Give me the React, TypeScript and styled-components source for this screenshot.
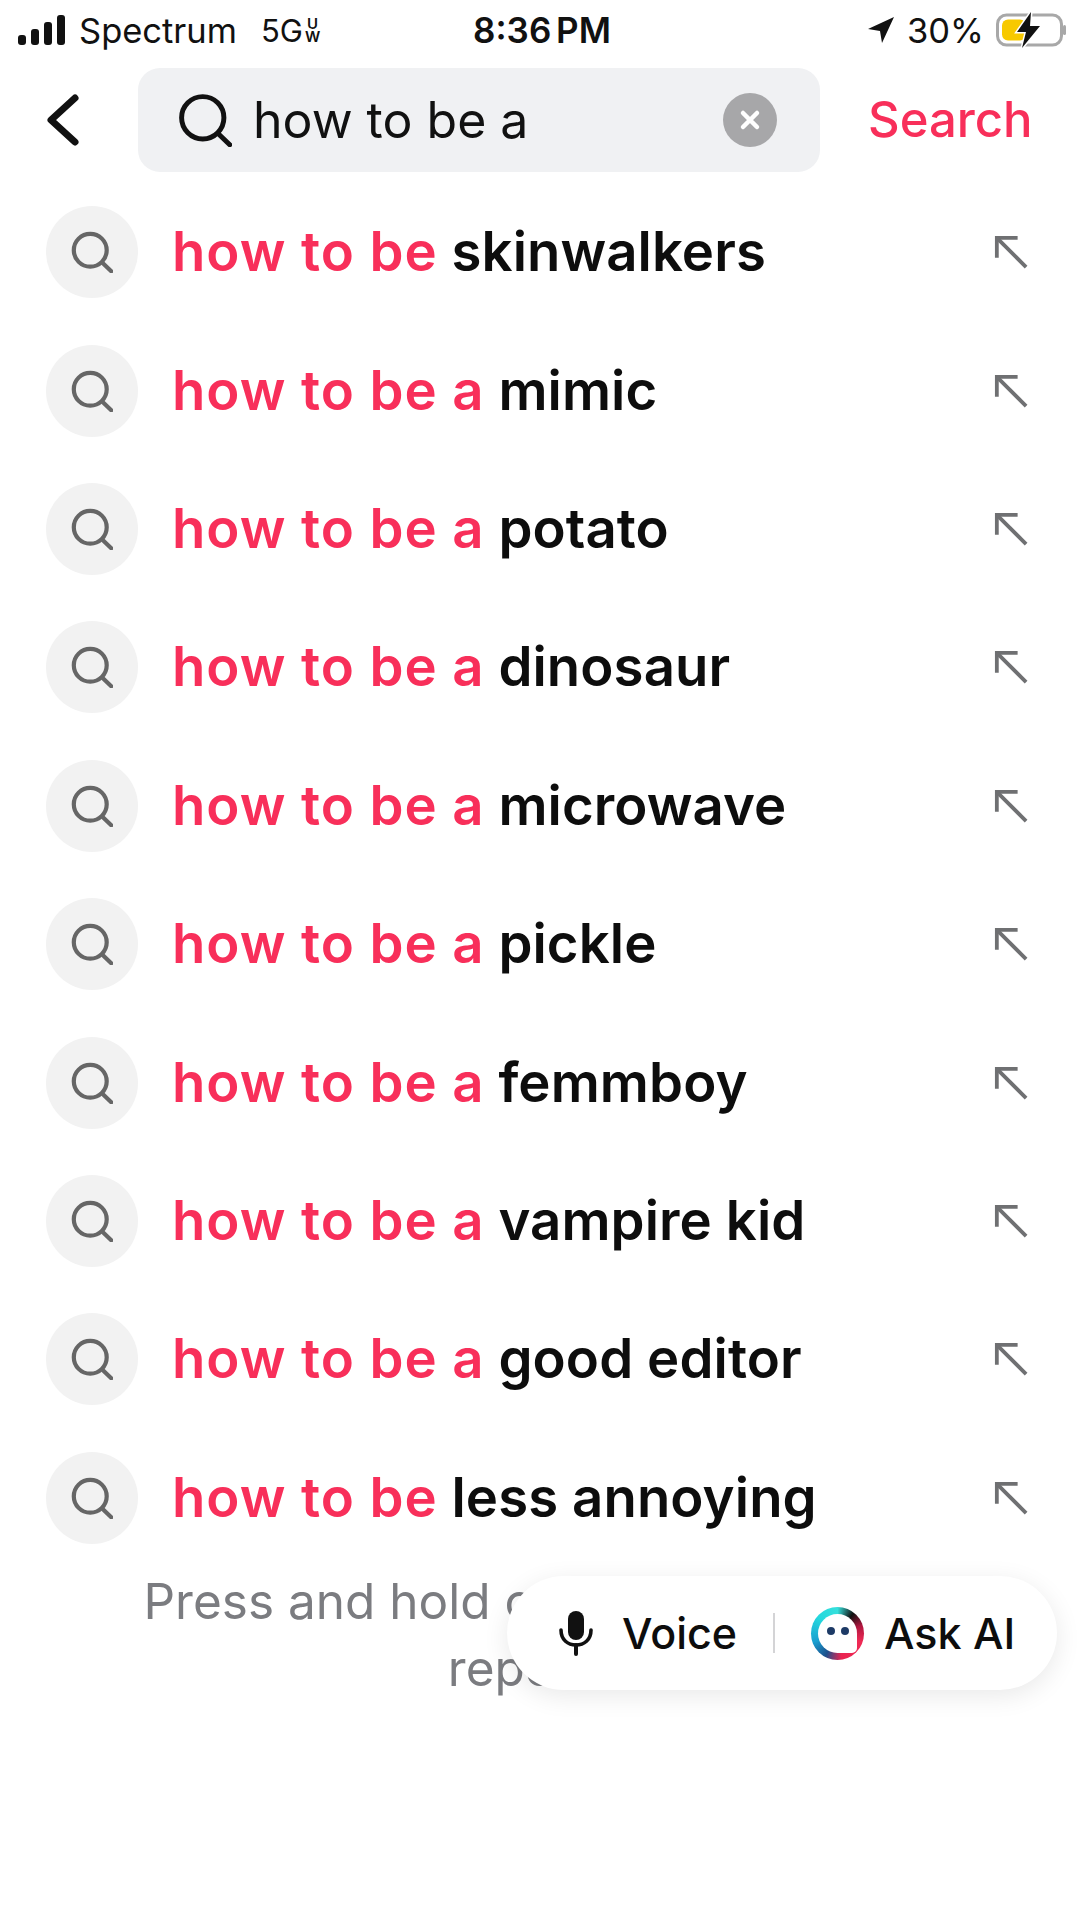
import styled, { createGlobalStyle } from "styled-components";

const GlobalStyle = createGlobalStyle`
  html, body {
    margin: 0;
    padding: 0;
    background: #fff;
    font-family: Inter, "Liberation Sans", sans-serif;
  }
`;

const Page = styled.div`
  position: relative;
  width: 1080px;
  height: 1920px;
  overflow: hidden;
  background: #fff;
`;

const StatusBar = styled.div`
  display: grid;
  grid-template-columns: 1fr auto 1fr;
  align-items: center;
  height: 60px;
  padding: 0 14px 0 18px;
  color: #111;
  font-size: 34.5px;
`;

const StatusLeft = styled.div`
  display: flex;
  align-items: center;
  gap: 13px;
`;

const StatusRight = styled.div`
  display: flex;
  align-items: center;
  justify-content: flex-end;
  gap: 12px;
`;

const Clock = styled.div`
  font-weight: 600;
  font-size: 35px;
  word-spacing: -4px;
`;

const Network = styled.span`
  display: inline-flex;
  align-items: center;
  margin-left: 11px;
  font-size: 31px;
`;

const NetworkBadge = styled.span`
  display: inline-flex;
  flex-direction: column;
  align-items: center;
  font-size: 15px;
  line-height: 13px;
  font-weight: 600;
  margin-left: 2px;
`;

const SearchRow = styled.div`
  display: flex;
  align-items: center;
  height: 104px;
  margin-top: 8px;
  padding-left: 46px;
`;

const BackButton = styled.div`
  display: flex;
  width: 92px;
  height: 60px;
  align-items: center;
`;

const SearchField = styled.div`
  display: flex;
  align-items: center;
  width: 682px;
  height: 104px;
  box-sizing: border-box;
  padding: 0 43px 0 40px;
  border-radius: 22px;
  background: #f0f1f3;
`;

const FieldText = styled.div`
  flex: 1;
  margin-left: 21px;
  font-size: 50px;
  color: #111;
`;

const ClearButton = styled.div`
  display: flex;
  align-items: center;
  justify-content: center;
  width: 54px;
  height: 54px;
  border-radius: 50%;
  background: #a7a7a9;
`;

const SearchLink = styled.div`
  margin-left: 48px;
  padding-bottom: 2px;
  font-size: 49px;
  font-weight: 500;
  color: #f82f5a;
`;

const Suggestions = styled.div`
  margin-top: 11px;
`;

const Row = styled.div`
  display: flex;
  align-items: center;
  height: 138.4px;
  padding: 0 52px 0 46px;
`;

const IconCircle = styled.div`
  display: flex;
  align-items: center;
  justify-content: center;
  flex: none;
  width: 92px;
  height: 92px;
  border-radius: 50%;
  background: #f2f2f2;
`;

const RowText = styled.div`
  flex: 1;
  margin-left: 34px;
  padding-bottom: 2px;
  font-size: 54.5px;
  font-weight: 600;
  letter-spacing: 0.1px;
  color: #0d0d0d;
`;

const Match = styled.span`
  color: #f82f5a;
  letter-spacing: 0.95px;
`;

const Hint = styled.div`
  width: 820px;
  margin: 1px auto 0;
  text-align: center;
  font-size: 49.5px;
  line-height: 67px;
  color: #7b7c80;
`;

const Pill = styled.div`
  position: absolute;
  left: 507px;
  top: 1576px;
  display: flex;
  align-items: center;
  width: 550px;
  height: 114px;
  box-sizing: border-box;
  padding-left: 51px;
  border-radius: 57px;
  background: #fff;
  box-shadow: 0 6px 26px rgba(0, 0, 0, 0.09);
`;

const PillLabel = styled.div<{ $gap: number }>`
  margin-left: ${(p) => p.$gap}px;
  font-size: 43px;
  font-weight: 500;
  color: #0d0d0d;
`;

const PillDivider = styled.div`
  width: 2px;
  height: 40px;
  margin: 0 36px 0 36px;
  background: #d4d4d6;
`;

const AiRing = styled.div`
  position: relative;
  flex: none;
  display: flex;
  align-items: center;
  justify-content: center;
  gap: 6px;
  width: 53px;
  height: 53px;
  padding-bottom: 5px;
  box-sizing: border-box;
  border-radius: 50%;
  background: conic-gradient(#35e0dc 0deg, #111 38deg, #b0163f 72deg, #ef2a55 110deg, #ea2350 170deg, #1c4f8c 208deg, #1a9fd0 250deg, #25d8de 310deg, #35e0dc 360deg);

  &::before {
    content: "";
    position: absolute;
    inset: 7px;
    border-radius: 50% 50% 5px 50%;
    background: #fff;
  }
`;

const AiEye = styled.span`
  position: relative;
  width: 8px;
  height: 8px;
  border-radius: 50%;
  background: #1d3a66;
`;

const SearchIcon = ({ size, stroke, width }: { size: number; stroke: string; width: number }) => (
  <svg width={size} height={size} viewBox="0 0 24 24" fill="none" stroke={stroke} strokeWidth={width} strokeLinecap="round">
    <circle cx="11" cy="11" r="9.4" />
    <path d="M17.8 18 L23 23" />
  </svg>
);

const ArrowIcon = () => (
  <svg width="34" height="34" viewBox="0 0 36 36" fill="none" stroke="#6f7072" strokeWidth="4">
    <path d="M3 24 V3 H25" />
    <path d="M3 3 L34 34" />
  </svg>
);

const items: [string, string][] = [
  ["how to be", "skinwalkers"],
  ["how to be a", "mimic"],
  ["how to be a", "potato"],
  ["how to be a", "dinosaur"],
  ["how to be a", "microwave"],
  ["how to be a", "pickle"],
  ["how to be a", "femmboy"],
  ["how to be a", "vampire kid"],
  ["how to be a", "good editor"],
  ["how to be", "less annoying"],
];

export default function App() {
  return (
    <Page>
      <GlobalStyle />
      <StatusBar>
        <StatusLeft>
          <svg width="48" height="32" viewBox="0 0 48 32" fill="#111">
            <rect x="0" y="21" width="8" height="10" rx="3" />
            <rect x="13" y="15" width="8" height="16" rx="3" />
            <rect x="26" y="8" width="8" height="23" rx="3" />
            <rect x="39" y="1" width="8" height="30" rx="3" />
          </svg>
          <span>Spectrum</span>
          <Network>
            5G
            <NetworkBadge>
              <span>U</span>
              <span>W</span>
            </NetworkBadge>
          </Network>
        </StatusLeft>
        <Clock>8:36 PM</Clock>
        <StatusRight>
          <svg width="28" height="28" viewBox="0 0 28 28" fill="#111">
            <path d="M27 1 L1 13 L13 15 L15 27 Z" />
          </svg>
          <span>30%</span>
          <svg width="70" height="38" viewBox="0 0 70 38">
            <rect x="1.5" y="4" width="64" height="30" rx="9" fill="none" stroke="#a8a8a8" strokeWidth="3" />
            <rect x="6" y="8.5" width="24" height="21" rx="6" fill="#f7c900" />
            <rect x="67" y="14" width="3" height="10" rx="1.5" fill="#a8a8a8" />
            <path d="M35 1 L21 21 H30 L26 37 L44 15 H34 Z" fill="#111" stroke="#fff" strokeWidth="3" paintOrder="stroke" />
          </svg>
        </StatusRight>
      </StatusBar>

      <SearchRow>
        <BackButton>
          <svg width="34" height="56" viewBox="0 0 34 56" fill="none" stroke="#111" strokeWidth="7" strokeLinecap="round" strokeLinejoin="round">
            <path d="M29 6 L5 28 L29 50" />
          </svg>
        </BackButton>
        <SearchField>
          <SearchIcon size={54} stroke="#111" width={2.2} />
          <FieldText>how to be a</FieldText>
          <ClearButton>
            <svg width="22" height="22" viewBox="0 0 22 22" stroke="#fff" strokeWidth="4.5" strokeLinecap="round">
              <path d="M4 4 L18 18 M18 4 L4 18" />
            </svg>
          </ClearButton>
        </SearchField>
        <SearchLink>Search</SearchLink>
      </SearchRow>

      <Suggestions>
        {items.map(([match, rest], i) => (
          <Row key={i}>
            <IconCircle>
              <SearchIcon size={42} stroke="#666" width={2.4} />
            </IconCircle>
            <RowText>
              <Match>{match}</Match> {rest}
            </RowText>
            <ArrowIcon />
          </Row>
        ))}
      </Suggestions>

      <Hint>Press and hold on a suggestion to report it</Hint>

      <Pill>
        <svg width="36" height="46" viewBox="0 0 36 46" fill="none">
          <rect x="10" y="1" width="16" height="29" rx="8" fill="#111" />
          <path d="M3 20 C3 30 10 35 18 35 C26 35 33 30 33 20" stroke="#111" strokeWidth="3.6" strokeLinecap="round" />
          <path d="M18 35 V44" stroke="#111" strokeWidth="4" strokeLinecap="round" />
        </svg>
        <PillLabel $gap={28}>Voice</PillLabel>
        <PillDivider />
        <AiRing>
          <AiEye />
          <AiEye />
        </AiRing>
        <PillLabel $gap={20}>Ask AI</PillLabel>
      </Pill>
    </Page>
  );
}
